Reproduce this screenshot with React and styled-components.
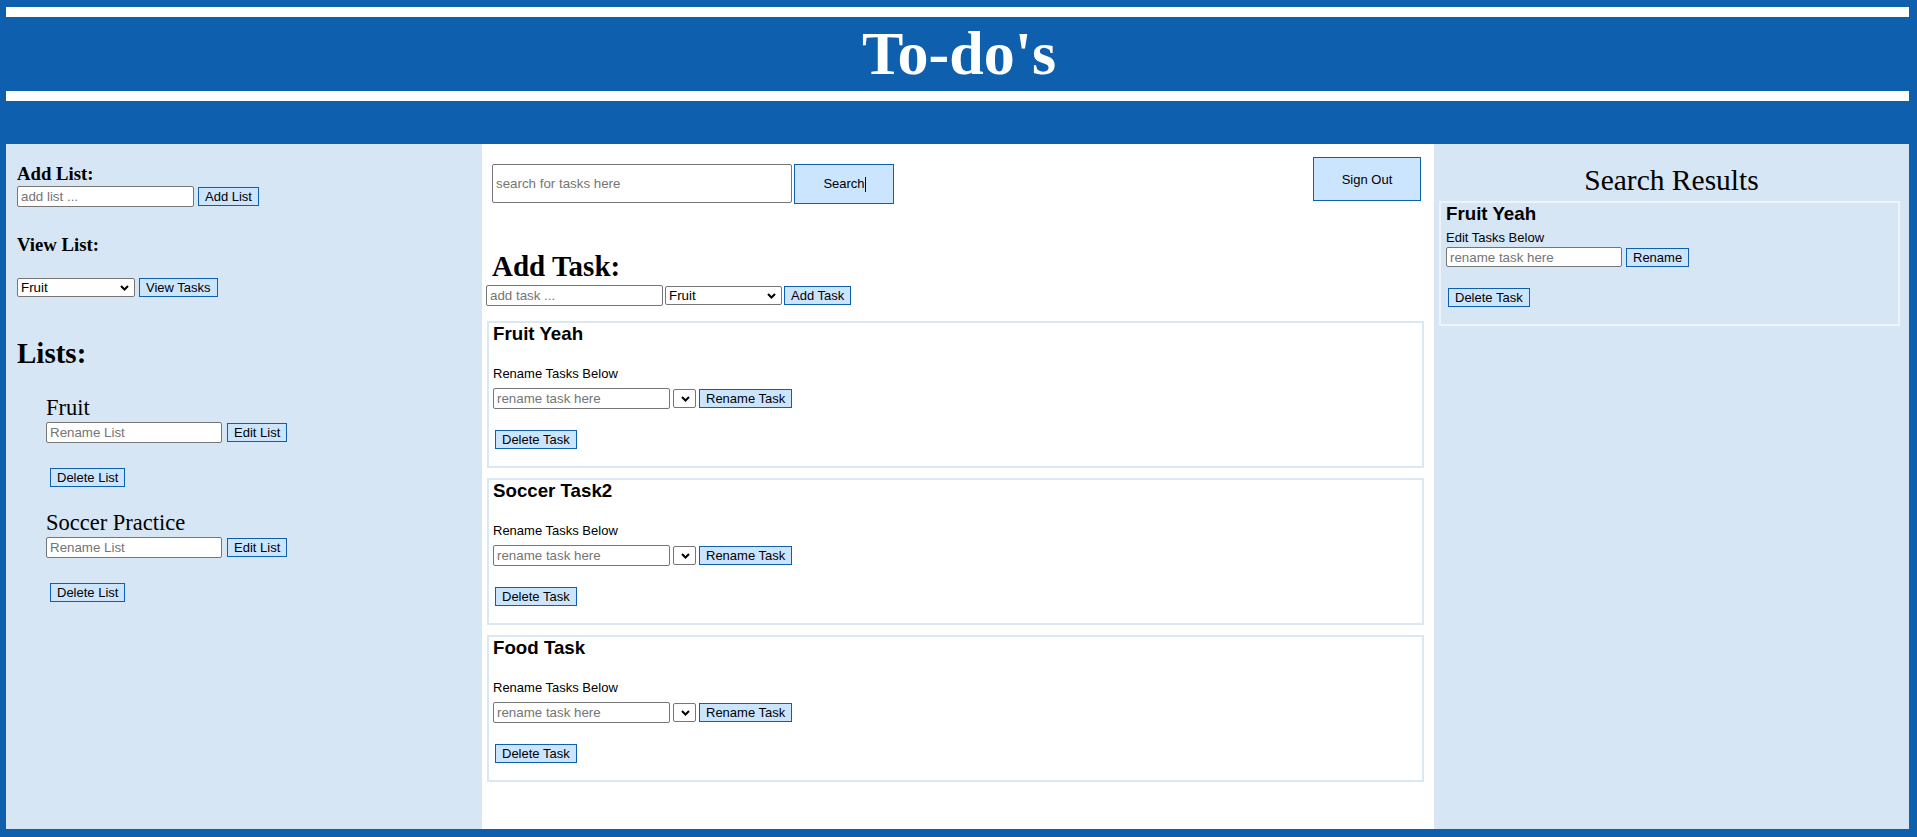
import React from 'react';
import styled, { createGlobalStyle } from 'styled-components';

const blue = '#0e5fad';
const pale = '#d6e6f5';

const GlobalStyle = createGlobalStyle`
  html, body {
    margin: 0;
    background: ${blue};
  }
  body {
    font-family: "Liberation Sans", Arial, sans-serif;
  }
  * {
    box-sizing: border-box;
  }
`;

const Page = styled.div`
  padding: 7px 8px 8px 6px;
`;

const Banner = styled.header`
  border-top: 10px solid #fff;
  border-bottom: 10px solid #fff;
  margin-bottom: 43px;
`;

const Title = styled.h1`
  margin: 0;
  height: 74px;
  padding: 1px 0 0 3px;
  line-height: 73px;
  text-align: center;
  color: #fff;
  font: bold 62px "Liberation Serif", serif;
`;

const Columns = styled.main`
  display: grid;
  grid-template-columns: 476px 952px 1fr;
  height: 685px;
`;

const Sidebar = styled.aside`
  background: ${pale};
  padding-left: 11px;
`;

const SideHeading = styled.h3`
  margin: ${p => p.$top}px 0 ${p => p.$bottom || 0}px;
  font: bold 18.72px "Liberation Serif", serif;
  line-height: 21.5px;
`;

const BigHeading = styled.h2`
  margin: ${p => p.$top}px 0 0;
  font: bold 29px "Liberation Serif", serif;
  line-height: 33px;
`;

const Row = styled.div`
  display: flex;
  align-items: center;
  gap: ${p => p.$gap || 4}px;
  margin-top: ${p => p.$top || 0}px;
  margin-left: ${p => p.$left || 0}px;
`;

const TextInput = styled.input`
  width: ${p => p.$width || 177}px;
  height: ${p => p.$height || 21}px;
  padding: 1px 3px;
  border: 1px solid #767676;
  border-radius: 2px;
  background: #fff;
  font: 13.33px "Liberation Sans", Arial, sans-serif;
  color: #000;
  &::placeholder {
    color: #757575;
  }
  &:focus {
    outline: none;
  }
`;

const Button = styled.button`
  height: ${p => p.$height || 19}px;
  width: ${p => (p.$width ? `${p.$width}px` : 'auto')};
  padding: 1px 6px;
  margin-left: ${p => p.$left || 0}px;
  border: 1px solid ${blue};
  background: #cce5ff;
  color: #000;
  font: 13px "Liberation Sans", Arial, sans-serif;
  line-height: 15px;
  cursor: pointer;
`;

const SearchButton = styled(Button)`
  &::after {
    content: '';
    display: inline-block;
    width: 1px;
    height: 15px;
    margin-right: -1px;
    background: #000;
    vertical-align: middle;
  }
`;

const SelectWrap = styled.span`
  position: relative;
  display: inline-flex;
`;

const Select = styled.select`
  appearance: none;
  width: ${p => p.$width}px;
  height: 19px;
  padding: 0 0 0 3px;
  border: 1px solid #767676;
  border-radius: 2px;
  background: #fff;
  color: #000;
  font: 13.33px "Liberation Sans", Arial, sans-serif;
`;

const Chevron = styled.svg`
  position: absolute;
  right: 6px;
  top: 7px;
  pointer-events: none;
`;

const ListEntries = styled.ul`
  list-style: none;
  margin: 25px 0 0;
  padding-left: 29px;
`;

const ListItem = styled.li`
  & + & {
    margin-top: 23px;
  }
`;

const ListName = styled.div`
  font: 22.5px "Liberation Serif", serif;
  line-height: 26px;
  color: #000;
`;

const Center = styled.section`
  background: #fff;
`;

const TopBar = styled.div`
  display: flex;
  justify-content: space-between;
  align-items: flex-start;
  padding: 13px 13px 0 10px;
`;

const SearchGroup = styled.div`
  display: flex;
  gap: 2px;
  margin-top: 7px;
`;

const AddTask = styled.div`
  padding-left: 10px;
`;

const Cards = styled.div`
  display: flex;
  flex-direction: column;
  gap: 10px;
  margin: 15px 10px 0 5px;
`;

const Card = styled.div`
  border: 2px solid ${p => p.$border};
  padding: 0 ${p => p.$pad}px 17px;
`;

const CardTitle = styled.h3`
  margin: 0;
  font: bold 18.72px "Liberation Sans", Arial, sans-serif;
  line-height: 21.5px;
  color: #000;
`;

const Label = styled.div`
  margin-top: ${p => p.$top}px;
  font: 13px "Liberation Sans", Arial, sans-serif;
  line-height: 15px;
  color: #000;
`;

const Results = styled.aside`
  background: ${pale};
`;

const ResultsHeading = styled.h2`
  margin: 19px 0 4px;
  text-align: center;
  font: 29.5px "Liberation Serif", serif;
  line-height: 34px;
  font-weight: normal;
`;

const ResultCards = styled.div`
  margin: 0 9px 0 5px;
`;

function Dropdown({ width, children }) {
  return (
    <SelectWrap>
      <Select $width={width}>{children}</Select>
      <Chevron width="9" height="6" viewBox="0 0 9 6">
        <path d="M1 1 L4.5 4.5 L8 1" fill="none" stroke="#000" strokeWidth="2" />
      </Chevron>
    </SelectWrap>
  );
}

const lists = ['Fruit', 'Soccer Practice'];
const tasks = ['Fruit Yeah', 'Soccer Task2', 'Food Task'];

function App() {
  return (
    <Page>
      <GlobalStyle />
      <Banner>
        <Title>To-do's</Title>
      </Banner>
      <Columns>
        <Sidebar>
          <SideHeading $top={19} $bottom={1.5}>Add List:</SideHeading>
          <Row>
            <TextInput placeholder="add list ..." />
            <Button>Add List</Button>
          </Row>
          <SideHeading $top={27}>View List:</SideHeading>
          <Row $top={22.5}>
            <Dropdown width={118}>
              <option>Fruit</option>
              <option>Soccer Practice</option>
            </Dropdown>
            <Button>View Tasks</Button>
          </Row>
          <BigHeading $top={40}>Lists:</BigHeading>
          <ListEntries>
            {lists.map(name => (
              <ListItem key={name}>
                <ListName>{name}</ListName>
                <Row $top={1} $gap={5}>
                  <TextInput $width={176} placeholder="Rename List" />
                  <Button>Edit List</Button>
                </Row>
                <Row $top={25} $left={4}>
                  <Button>Delete List</Button>
                </Row>
              </ListItem>
            ))}
          </ListEntries>
        </Sidebar>

        <Center>
          <TopBar>
            <SearchGroup>
              <TextInput $width={300} $height={39} placeholder="search for tasks here" />
              <SearchButton $width={100} $height={40}>Search</SearchButton>
            </SearchGroup>
            <Button $width={108} $height={44}>Sign Out</Button>
          </TopBar>
          <AddTask>
            <BigHeading $top={45.5}>Add Task:</BigHeading>
          </AddTask>
          <Row $top={2} $left={4} $gap={2}>
            <TextInput placeholder="add task ..." />
            <Dropdown width={117}>
              <option>Fruit</option>
              <option>Soccer Practice</option>
            </Dropdown>
            <Button>Add Task</Button>
          </Row>
          <Cards>
            {tasks.map(task => (
              <Card key={task} $border="#dbe7f3" $pad={4}>
                <CardTitle>{task}</CardTitle>
                <Label $top={21.5}>Rename Tasks Below</Label>
                <Row $top={7} $gap={3}>
                  <TextInput placeholder="rename task here" />
                  <Dropdown width={23} />
                  <Button>Rename Task</Button>
                </Row>
                <Row $top={21} $left={2}>
                  <Button>Delete Task</Button>
                </Row>
              </Card>
            ))}
          </Cards>
        </Center>

        <Results>
          <ResultsHeading>Search Results</ResultsHeading>
          <ResultCards>
            <Card $border="#eef4fa" $pad={5}>
              <CardTitle>Fruit Yeah</CardTitle>
              <Label $top={5.5}>Edit Tasks Below</Label>
              <Row $top={2}>
                <TextInput $width={176} $height={20} placeholder="rename task here" />
                <Button>Rename</Button>
              </Row>
              <Row $top={21} $left={2}>
                <Button>Delete Task</Button>
              </Row>
            </Card>
          </ResultCards>
        </Results>
      </Columns>
    </Page>
  );
}

export default App;
